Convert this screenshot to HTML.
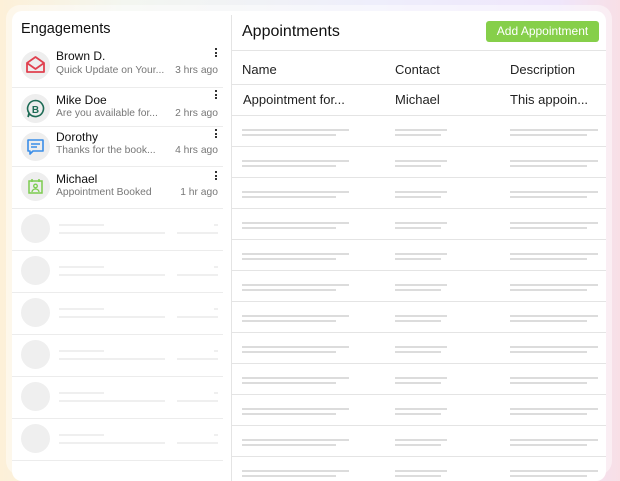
<!DOCTYPE html>
<html><head><style>
*{margin:0;padding:0;box-sizing:border-box}
body{width:620px;height:470px;overflow:hidden;position:relative;font-family:"Liberation Sans",sans-serif;color:#1a1a1a;
background:linear-gradient(90deg,#fdf0d8 0%,#f3f6f0 20%,#eeeefb 60%,#efe6fb 90%,#f8dfe6 100%)}
.frame{position:absolute;left:6px;top:5px;width:606px;height:470px;border-radius:14px;background:rgba(255,255,255,.45)}
.card{position:absolute;left:12px;top:11px;width:594px;height:470px;border-radius:10px;background:#fff;overflow:hidden}
.a{position:absolute}
.h{font-size:15px;color:#111}
.row{position:absolute;left:0;width:211px;border-bottom:1px solid #ececec}
.av{position:absolute;left:9px;width:29px;height:29px;border-radius:50%;background:#eeeeee}
.nm{position:absolute;left:44px;font-size:12px;color:#111}
.sb{position:absolute;left:44px;font-size:10.3px;color:#777;white-space:nowrap}
.tm{position:absolute;right:5px;font-size:10.3px;color:#777}
.dots{position:absolute;right:6px;font-size:10px;font-weight:bold;line-height:3px;width:2px}
.dots i{display:block;width:2px;height:2px;background:#333;margin-bottom:1.5px}
.sk{position:absolute;height:2px;background:#efefef}
.tr{position:absolute;left:220px;width:374px;border-bottom:1px solid #e4e4e4}
.ln{position:absolute;height:1.5px;background:#dcdcdc}
.th{position:absolute;font-size:13px;color:#222}
</style></head><body>
<div class="frame"></div>
<div class="card">
 <div class="a h" style="left:9px;top:10px;font-size:14.5px">Engagements</div>
 <div class="a" style="left:219px;top:4px;width:1px;height:470px;background:#e4e4e4"></div>
 <!-- left rows -->
 <div class="row" style="top:33px;height:44px">
  <div class="av" style="top:7px"><svg width="29" height="29" viewBox="0 0 29 29"><path d="M6 12 L14.5 6 L23 12 V21 H6 Z M6 12 L14.5 18 L23 12" fill="none" stroke="#e0404f" stroke-width="1.8" stroke-linejoin="round"/></svg></div>
  <div class="nm" style="top:5px">Brown D.</div><div class="sb" style="top:21px">Quick Update on Your...</div><div class="tm" style="top:21px">3 hrs ago</div>
  <div class="dots" style="top:4px"><i></i><i></i><i></i></div></div>
 <div class="row" style="top:77px;height:39px">
  <div class="av" style="top:6px"><svg width="29" height="29" viewBox="0 0 29 29"><path d="M14.5 6.5a8 8 0 1 1-6 13.3L7 23l1-4a8 8 0 0 1 6.5-12.5z" fill="none" stroke="#1d6b55" stroke-width="1.6"/><text x="14.5" y="19" font-size="10" font-weight="bold" text-anchor="middle" fill="#1d6b55" font-family="Liberation Sans">B</text></svg></div>
  <div class="nm" style="top:5px">Mike Doe</div><div class="sb" style="top:20px">Are you available for...</div><div class="tm" style="top:20px">2 hrs ago</div>
  <div class="dots" style="top:2px"><i></i><i></i><i></i></div></div>
 <div class="row" style="top:116px;height:40px">
  <div class="av" style="top:5px"><svg width="29" height="29" viewBox="0 0 29 29"><path d="M7 8 H22 V19 H12 L9 22 V19 H7 Z" fill="none" stroke="#3a8ee8" stroke-width="1.6" stroke-linejoin="round"/><path d="M10 12H19M10 15H16" stroke="#3a8ee8" stroke-width="1.5"/></svg></div>
  <div class="nm" style="top:3px">Dorothy</div><div class="sb" style="top:18px">Thanks for the book...</div><div class="tm" style="top:18px">4 hrs ago</div>
  <div class="dots" style="top:2px"><i></i><i></i><i></i></div></div>
 <div class="row" style="top:156px;height:42px">
  <div class="av" style="top:5px"><svg width="29" height="29" viewBox="0 0 29 29"><rect x="8" y="9" width="13" height="12" fill="none" stroke="#7ccc4e" stroke-width="1.5"/><path d="M11 7V10M18 7V10" stroke="#7ccc4e" stroke-width="1.5"/><circle cx="14.5" cy="14" r="1.8" fill="none" stroke="#7ccc4e" stroke-width="1.3"/><path d="M11 20a3.5 3 0 0 1 7 0" fill="none" stroke="#7ccc4e" stroke-width="1.3"/></svg></div>
  <div class="nm" style="top:5px">Michael</div><div class="sb" style="top:20px">Appointment Booked</div><div class="tm" style="top:20px">1 hr ago</div>
  <div class="dots" style="top:4px"><i></i><i></i><i></i></div></div>
 <!-- skeleton rows -->
 <div id="skl"></div>
 <!-- right -->
 <div class="a h" style="left:230px;top:12px;font-size:16px">Appointments</div>
 <div class="a" style="left:474px;top:10px;width:113px;height:21px;border-radius:3px;background:#86cf4a;color:#fff;font-size:12px;line-height:21px;text-align:center">Add Appointment</div>
 <div class="tr" style="top:0;height:40px"></div>
 <div class="tr" style="top:40px;height:34px"></div>
 <div class="th" style="left:230px;top:51px">Name</div><div class="th" style="left:383px;top:51px">Contact</div><div class="th" style="left:498px;top:51px">Description</div>
 <div class="tr" style="top:74px;height:31px"></div>
 <div class="th" style="left:231px;top:81px">Appointment for...</div><div class="th" style="left:383px;top:81px">Michael</div><div class="th" style="left:498px;top:81px">This appoin...</div>
 <div id="tbl"></div>
</div>
<script>
var s='';
for(var i=0;i<6;i++){var t=198+i*42;
s+='<div class="row" style="top:'+t+'px;height:42px"></div><div class="av" style="top:'+(t+5)+'px;background:#efefef"></div>'+
'<div class="sk" style="left:47px;width:45px;top:'+(t+15)+'px"></div><div class="sk" style="left:47px;width:106px;top:'+(t+23)+'px"></div>'+
'<div class="sk" style="left:165px;width:41px;top:'+(t+23)+'px"></div><div class="sk" style="left:202px;width:4px;top:'+(t+15)+'px"></div>';}
document.getElementById('skl').innerHTML=s;
var r='';
for(var j=0;j<12;j++){var y=105+j*31;
r+='<div class="tr" style="top:'+y+'px;height:31px"></div>'+
'<div class="ln" style="left:230px;width:107px;top:'+(y+13)+'px"></div><div class="ln" style="left:230px;width:94px;top:'+(y+18)+'px"></div>'+
'<div class="ln" style="left:383px;width:52px;top:'+(y+13)+'px"></div><div class="ln" style="left:383px;width:46px;top:'+(y+18)+'px"></div>'+
'<div class="ln" style="left:498px;width:88px;top:'+(y+13)+'px"></div><div class="ln" style="left:498px;width:77px;top:'+(y+18)+'px"></div>';}
document.getElementById('tbl').innerHTML=r;
</script>
</body></html>
